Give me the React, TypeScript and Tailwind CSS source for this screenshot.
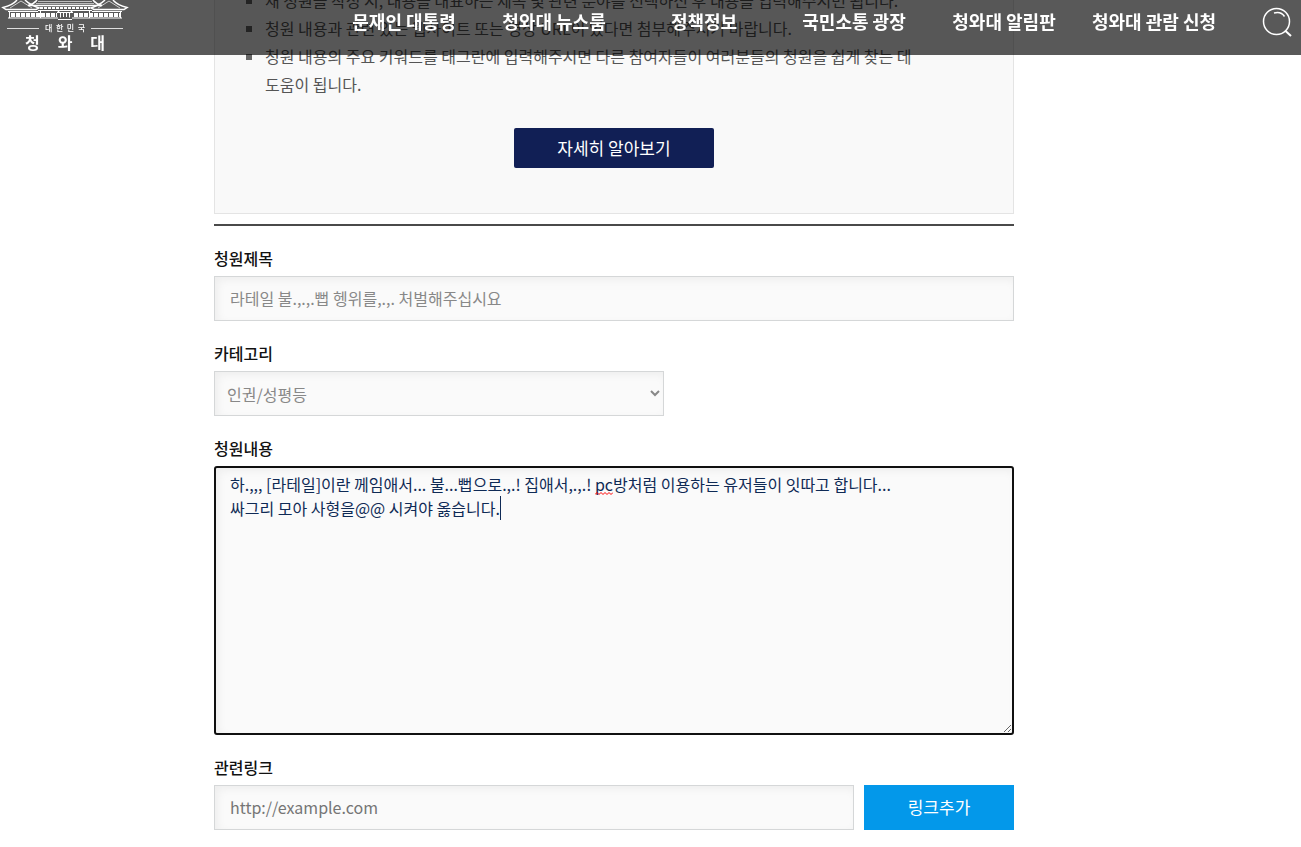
import type { ReactNode } from 'react';

const navItems = [
  '문재인 대통령',
  '청와대 뉴스룸',
  '정책정보',
  '국민소통 광장',
  '청와대 알림판',
  '청와대 관람 신청',
];

const notices = [
  '새 청원을 작성 시, 내용을 대표하는 제목 및 관련 분야를 선택하신 후 내용을 입력해주시면 됩니다.',
  '청원 내용과 관련 있는 웹사이트 또는 영상 URL이 있다면 첨부해주시기 바랍니다.',
  '청원 내용의 주요 키워드를 태그란에 입력해주시면 다른 참여자들이 여러분들의 청원을 쉽게 찾는 데 도움이 됩니다.',
];

const fieldClass =
  'block h-[45px] border border-[#d5d7d8] bg-[#fafafa] shadow-[inset_3px_3px_8px_rgba(0,0,0,0.05)]';

interface FieldProps {
  id: string;
  label: string;
  children: ReactNode;
}

function Field({ id, label, children }: FieldProps) {
  return (
    <div>
      <label htmlFor={id} className="mb-1.5 block font-medium leading-6 text-[#111]">
        {label}
      </label>
      {children}
    </div>
  );
}

/** Palace roof and colonnade mark. */
function PalaceMark() {
  return (
    <svg className="block h-[22px] w-[130px]" viewBox="0 0 130 22" fill="none" stroke="#fff">
      {/* Side pavilion roofs */}
      <path d="M17 0 Q13 5 3 7.5 L6 9.5 H36 L39 8 Q30 5 25 0" strokeWidth="1.5" />
      <path d="M113 0 Q117 5 127 7.5 L124 9.5 H94 L91 8 Q100 5 105 0" strokeWidth="1.5" />
      <path d="M10 8 L21 1 L32 8 M98 8 L109 1 L120 8" strokeOpacity="0.7" />
      {/* Main hall */}
      <path d="M37 0 Q34 4 28 5.5 H102 Q96 4 93 0" strokeWidth="1.5" />
      <path d="M38 1.5 H92 M36 3.5 H94" strokeOpacity="0.6" />
      <path d="M40 8 H90" strokeWidth="2" strokeDasharray="3 1" />
      <path d="M38 10.5 H92" />
      {/* Colonnade */}
      <path d="M8 11.5 H38 M92 11.5 H122" />
      <path d="M11 15 H57 M74 15 H120" strokeWidth="4" strokeDasharray="4 1" />
      <path d="M9.5 11 V18 M40.5 10 V18 M89.5 10 V18 M120.5 11 V18" />
      <path d="M57 12.5 L60 10.5 H70 L73 12.5 Z M60.5 13 V17.5 M69.5 13 V17.5 M63.5 13 V17 M66.5 13 V17" />
      <path d="M8 18 H58 M72 18 H122 M58 19.5 H72" />
    </svg>
  );
}

function Logo() {
  return (
    <a href="#" className="flex w-[130px] shrink-0 flex-col items-center text-white" aria-label="대한민국 청와대">
      <PalaceMark />
      <span className="flex w-[116px] items-center gap-1.5 text-[8px] font-medium leading-3">
        <span className="h-px flex-1 bg-white/80" />
        <span className="flex w-10 justify-between">
          <span>대</span>
          <span>한</span>
          <span>민</span>
          <span>국</span>
        </span>
        <span className="h-px flex-1 bg-white/80" />
      </span>
      <span className="flex w-20 justify-between text-base font-bold leading-4">
        <span>청</span>
        <span>와</span>
        <span>대</span>
      </span>
    </a>
  );
}

function Header() {
  return (
    <header className="fixed inset-x-0 top-0 z-10 flex h-[55px] justify-between bg-black/65">
      <Logo />
      <div className="flex">
        <nav className="flex">
          {navItems.map((item) => (
            <a
              key={item}
              href="#"
              className="w-[150px] pt-[7px] text-center text-lg font-bold leading-7 text-white"
            >
              {item}
            </a>
          ))}
        </nav>
        <button type="button" className="flex w-[72px] justify-end pr-2 pt-[7px]" aria-label="검색">
          <svg className="size-8" viewBox="0 0 32 32" fill="none" stroke="#fff" strokeWidth="1.5">
            <circle cx="15.5" cy="14.5" r="13" />
            <path d="M24 23.5 L30 29" strokeWidth="2" />
            <path d="M13 6 Q20 4 23.5 9.5" />
          </svg>
        </button>
      </div>
    </header>
  );
}

export default function App() {
  return (
    <div className="min-h-screen bg-white font-['Noto_Sans_CJK_KR',sans-serif] text-base">
      <Header />
      <div className="max-w-[1228px]">
        <main className="mx-auto max-w-[800px] pb-4">
          <section className="-mt-3.5 border border-t-0 border-[#e4e4e4] bg-[#f9f9f9] pb-[45px] pl-[30px] pr-20">
            <ul className="break-keep leading-7 text-[#555]">
              {notices.map((notice) => (
                <li key={notice} className="flex">
                  <span className="ml-px mr-[13px] mt-3 size-1.5 shrink-0 bg-[#666]" />
                  {notice}
                </li>
              ))}
            </ul>
            <a
              href="#"
              className="ml-[269px] mt-[30px] block h-10 w-[200px] rounded-xs bg-[#111f55] text-center text-[17px] leading-10 text-white"
            >
              자세히 알아보기
            </a>
          </section>

          <form className="mt-2.5 flex flex-col gap-5 border-t-2 border-[#4a4a4a] pt-5">
            <Field id="title" label="청원제목">
              <input
                id="title"
                type="text"
                className={`${fieldClass} w-full px-[15px] pb-0.5 text-[#888]`}
                defaultValue="라테일 불.,.,.뻡 헹위를,.,. 처벌해주십시요"
              />
            </Field>

            <Field id="category" label="카테고리">
              <select id="category" className={`${fieldClass} w-[450px] max-w-full px-2 text-[#888]`}>
                <option>인권/성평등</option>
              </select>
            </Field>

            <Field id="content" label="청원내용">
              <div className="relative">
                <textarea
                  id="content"
                  spellCheck={false}
                  className="block h-[269px] w-full rounded-[3px] border-2 border-[#101010] bg-[#fafafa] px-3.5 py-1 leading-6 text-[#0f2a55] shadow-[inset_3px_3px_8px_rgba(0,0,0,0.05)]"
                  defaultValue={
                    '하.,,, [라테일]이란 께임애서... 불...뻡으로.,.! 집애서,.,.! pc방처럼 이용하는 유저들이 잇따고 합니다...\n싸그리 모아 사형을@@ 시켜야 옳습니다.'
                  }
                />
                {/* Spelling mark and caret */}
                <svg
                  className="pointer-events-none absolute left-[381px] top-[26px] h-[3px] w-[18px]"
                  viewBox="0 0 18 3"
                  fill="none"
                  stroke="#f00"
                >
                  <path d="M0 2.5 L2 0.5 L4 2.5 L6 0.5 L8 2.5 L10 0.5 L12 2.5 L14 0.5 L16 2.5 L18 0.5" />
                </svg>
                <span className="pointer-events-none absolute left-[286px] top-[30px] h-6 w-px bg-[#0f2a55]" />
              </div>
            </Field>

            <Field id="link" label="관련링크">
              <div className="flex gap-2.5">
                <input
                  id="link"
                  type="url"
                  className={`${fieldClass} min-w-0 flex-1 px-[15px] pb-0.5 placeholder:text-[#757575]`}
                  placeholder="http://example.com"
                />
                <button type="button" className="h-[45px] w-[150px] bg-[#0398ea] pb-0.5 text-[17px] text-white">
                  링크추가
                </button>
              </div>
            </Field>
          </form>
        </main>
      </div>
    </div>
  );
}
